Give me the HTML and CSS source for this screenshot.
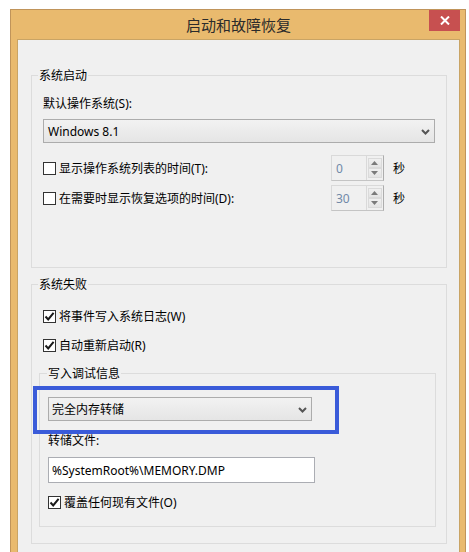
FILE: index.html
```html
<!DOCTYPE html>
<html lang="zh-CN">
  <head>
    <meta charset="UTF-8" />
    <meta name="viewport" content="width=device-width, initial-scale=1.0" />
    <title>启动和故障恢复</title>
    <link rel="stylesheet" href="styles.css">
  </head>
  <body>
    <div class="window">
      <div class="titlebar">
        <h1 class="title">启动和故障恢复</h1>
        <button class="close" aria-label="关闭">
          <svg width="10" height="9" viewBox="0 0 10 9">
            <path d="M1 0.5 L9 8.5 M9 0.5 L1 8.5" stroke="#ffffff" stroke-width="2" fill="none" />
          </svg>
        </button>
      </div>

      <div class="pane">
        <fieldset class="group group-startup">
          <legend>系统启动</legend>
          <label class="field-label">默认操作系统(S):</label>
          <div class="select select-os">
            <span>Windows 8.1</span>
            <svg class="chevron" width="9" height="6" viewBox="0 0 9 6">
              <path d="M1 1 L4.5 4.5 L8 1" stroke="#555555" stroke-width="2" fill="none" />
            </svg>
          </div>

          <div class="timer-row timer-first">
            <label class="check">
              <span class="box"></span>
              显示操作系统列表的时间(T):
            </label>
            <div class="spin">
              <span class="spin-value">0</span>
              <span class="spin-buttons">
                <span class="spin-btn">
                  <svg width="7" height="4" viewBox="0 0 7 4"><path d="M0 4 L3.5 0 L7 4 Z" fill="#7a7a7a" /></svg>
                </span>
                <span class="spin-btn">
                  <svg width="7" height="4" viewBox="0 0 7 4"><path d="M0 0 L3.5 4 L7 0 Z" fill="#7a7a7a" /></svg>
                </span>
              </span>
            </div>
            <span class="unit">秒</span>
          </div>

          <div class="timer-row timer-second">
            <label class="check">
              <span class="box"></span>
              在需要时显示恢复选项的时间(D):
            </label>
            <div class="spin">
              <span class="spin-value">30</span>
              <span class="spin-buttons">
                <span class="spin-btn">
                  <svg width="7" height="4" viewBox="0 0 7 4"><path d="M0 4 L3.5 0 L7 4 Z" fill="#7a7a7a" /></svg>
                </span>
                <span class="spin-btn">
                  <svg width="7" height="4" viewBox="0 0 7 4"><path d="M0 0 L3.5 4 L7 0 Z" fill="#7a7a7a" /></svg>
                </span>
              </span>
            </div>
            <span class="unit">秒</span>
          </div>
        </fieldset>

        <fieldset class="group group-failure">
          <legend>系统失败</legend>
          <label class="check check-line">
            <span class="box">
              <svg width="11" height="11" viewBox="0 0 11 11"><path d="M1.5 5.5 L4.2 8.4 L9.6 1.8" stroke="#1a1a1a" stroke-width="2" fill="none" /></svg>
            </span>
            将事件写入系统日志(W)
          </label>
          <label class="check check-line check-restart">
            <span class="box">
              <svg width="11" height="11" viewBox="0 0 11 11"><path d="M1.5 5.5 L4.2 8.4 L9.6 1.8" stroke="#1a1a1a" stroke-width="2" fill="none" /></svg>
            </span>
            自动重新启动(R)
          </label>

          <fieldset class="group group-debug">
            <legend>写入调试信息</legend>
            <div class="highlight">
              <div class="select select-dump">
                <span>完全内存转储</span>
                <svg class="chevron" width="9" height="6" viewBox="0 0 9 6">
                  <path d="M1 1 L4.5 4.5 L8 1" stroke="#555555" stroke-width="2" fill="none" />
                </svg>
              </div>
            </div>
            <label class="field-label dump-label">转储文件:</label>
            <div class="text-input">%SystemRoot%\MEMORY.DMP</div>
            <label class="check check-overwrite">
              <span class="box">
                <svg width="11" height="11" viewBox="0 0 11 11"><path d="M1.5 5.5 L4.2 8.4 L9.6 1.8" stroke="#1a1a1a" stroke-width="2" fill="none" /></svg>
              </span>
              覆盖任何现有文件(O)
            </label>
          </fieldset>
        </fieldset>
      </div>
    </div>
  </body>
</html>
```

FILE: styles.css
```css
* {
  margin: 0;
  padding: 0;
  box-sizing: border-box;
}

body {
  font-family: "Noto Sans", "Noto Sans CJK SC", sans-serif;
  font-size: 12px;
  line-height: 16px;
  color: #000000;
  background: #ffffff;
  height: 552px;
  overflow: hidden;
}

.window {
  margin: 9px 0 0 10px;
  width: 456px;
  height: 543px;
  border: 1px solid #c0945a;
  border-bottom: none;
  background: #e9ba6e;
  padding: 0 5px 0 6px;
  display: flex;
  flex-direction: column;
}

.titlebar {
  display: grid;
  grid-template-columns: 1fr auto 1fr;
  height: 29px;
  flex: none;
}

.title {
  grid-column: 2;
  font-family: "Noto Sans CJK SC", sans-serif;
  font-size: 15px;
  font-weight: normal;
  line-height: 30px;
  color: #2b2b2b;
}

.close {
  grid-column: 3;
  justify-self: end;
  width: 31px;
  height: 21px;
  border: none;
  background: #c75050;
  display: grid;
  place-items: center;
}

.pane {
  flex: 1;
  min-height: 0;
  background: #f0f0f0;
  border: 1px solid #c9a465;
  border-bottom: none;
  padding: 27px 12px 0 13px;
}

/* group boxes */
.group {
  border: 1px solid #dcdcdc;
  min-width: 0;
}

.group legend {
  padding: 0 1px;
  font-size: 12px;
  line-height: 17px;
}

.group-startup {
  padding: 11px 11px 56px 11px;
}

.group-startup legend {
  margin-left: -5px;
}

.group-failure {
  margin-top: 8px;
  padding: 15px 10px 16px 7px;
}

.group-failure > legend {
  margin-left: -1px;
}

.group-debug {
  margin-top: 12px;
  padding: 4px 10px 16px 8px;
}

.group-debug legend {
  margin-left: -1px;
}

.field-label {
  display: block;
  padding-top: 1px;
  height: 16px;
}

/* dropdowns */
.select {
  display: flex;
  align-items: center;
  justify-content: space-between;
  height: 24px;
  border: 1px solid #acacac;
  background: linear-gradient(#f2f2f2, #e5e5e5);
  padding: 1px 4px 0;
}

.select-os {
  margin-top: 8px;
}

.select-dump {
  width: 264px;
  padding-left: 3px;
}

.highlight {
  margin-left: -15px;
  width: 306px;
  border: 4px solid #3a5bd9;
  padding: 7px 0 9px 11px;
}

/* checkboxes */
.check {
  display: flex;
  align-items: center;
}

.box {
  width: 13px;
  height: 13px;
  flex: none;
  border: 1px solid #333333;
  background: #ffffff;
  margin-right: 3px;
  display: grid;
  place-items: center;
}

.check-line {
  margin-left: 4px;
  height: 16px;
  padding-top: 1px;
}

.check-restart {
  margin-top: 13px;
}

/* timer rows */
.timer-row {
  display: flex;
  align-items: center;
  height: 26px;
  padding-top: 1px;
}

.timer-first {
  margin-top: 12px;
}

.timer-second {
  margin-top: 4px;
}

.timer-row .check {
  flex: 1;
}

.spin {
  display: flex;
  width: 53px;
  height: 26px;
  margin-top: -1px;
  border: 1px solid #d9d9d9;
  border-right-color: #adadad;
  border-bottom-color: #c4c4c4;
  background: #f0f0f0;
}

.spin-value {
  flex: 1;
  padding-left: 4px;
  line-height: 25px;
  color: #7189a8;
}

.spin-buttons {
  width: 17px;
  display: flex;
  flex-direction: column;
  border-left: 1px solid #d9d9d9;
  padding: 2px 1px;
}

.spin-btn {
  flex: 1;
  display: grid;
  place-items: center;
  border: 1px solid #dadada;
  background: linear-gradient(#f0f0f0, #e4e4e4);
}

.unit {
  margin-left: 9px;
  margin-right: 30px;
}

/* dump file */
.dump-label {
  margin-top: -2px;
}

.text-input {
  margin-top: 9px;
  width: 267px;
  height: 26px;
  border: 1px solid #abadb3;
  background: #ffffff;
  padding-left: 3px;
  line-height: 25px;
}

.check-overwrite {
  margin-top: 11px;
  height: 16px;
  padding-top: 1px;
}
```
